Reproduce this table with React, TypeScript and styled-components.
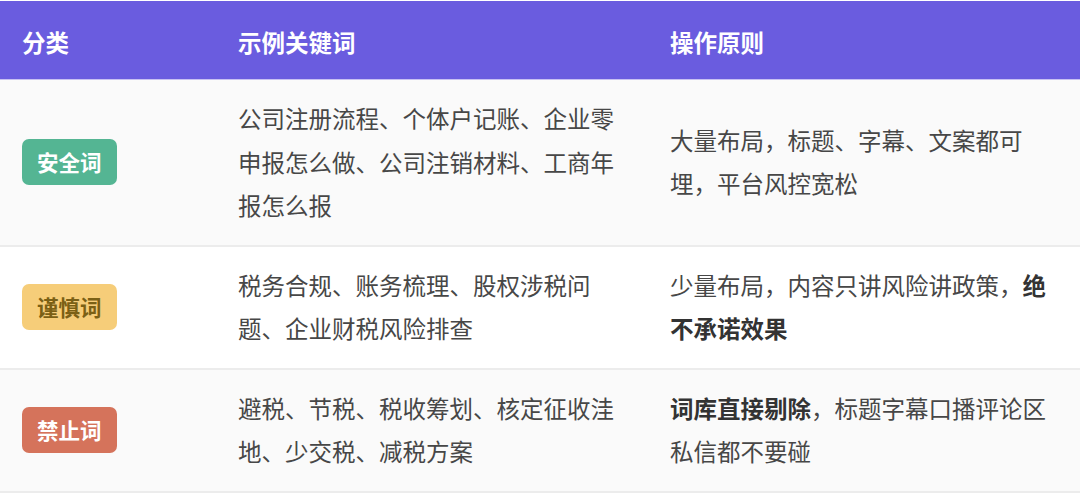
import React from 'react';
import styled, { createGlobalStyle } from 'styled-components';

const GlobalStyle = createGlobalStyle`
    html, body {
        margin: 0;
        padding: 0;
        background: #ffffff;
    }
    body {
        font-family: "Noto Sans CJK SC", "Noto Sans", sans-serif;
        text-spacing-trim: space-all;
    }
`;

type Tone = 'safe' | 'careful' | 'banned';

interface Row {
    tone: Tone;
    label: string;
    keywords: React.ReactNode;
    rule: React.ReactNode;
}

const badgeColors: Record<Tone, { bg: string; fg: string }> = {
    safe: { bg: '#54b593', fg: '#ffffff' },
    careful: { bg: '#f6cd79', fg: '#7b6015' },
    banned: { bg: '#d5735b', fg: '#ffffff' },
};

const Table = styled.div`
    width: 1080px;
    padding-top: 1px;
`;

const Grid = styled.div`
    display: grid;
    grid-template-columns: 20% 40% 40%;
    align-items: center;
`;

const Header = styled(Grid)`
    height: 78px;
    background: #6a5cdf;
    border-bottom: 1px solid #c8c1f2;
    color: #ffffff;
    font-size: 23.5px;
    font-weight: 700;
`;

const HeadCell = styled.div`
    padding: 0 22px;
    line-height: 1;
    margin-top: 6px;
`;

const BodyRow = styled(Grid)<{ $alt: boolean }>`
    background: ${(p) => (p.$alt ? '#fafafa' : '#ffffff')};
    border-bottom: 2px solid #ececec;
    padding: 17px 0;
`;

const Cell = styled.div`
    padding: 0 22px;
    font-size: 23.5px;
    line-height: 43.5px;
    color: #474747;
`;

const Badge = styled.span<{ $tone: Tone }>`
    display: inline-block;
    padding: 12px 15px;
    border-radius: 7px;
    font-size: 21.5px;
    line-height: 22px;
    font-weight: 700;
    background: ${(p) => badgeColors[p.$tone].bg};
    color: ${(p) => badgeColors[p.$tone].fg};
`;

const Strong = styled.b`
    font-weight: 700;
    color: #333333;
`;

const rows: Row[] = [
    {
        tone: 'safe',
        label: '安全词',
        keywords: '公司注册流程、个体户记账、企业零申报怎么做、公司注销材料、工商年报怎么报',
        rule: '大量布局，标题、字幕、文案都可埋，平台风控宽松',
    },
    {
        tone: 'careful',
        label: '谨慎词',
        keywords: '税务合规、账务梳理、股权涉税问题、企业财税风险排查',
        rule: (
            <>
                少量布局，内容只讲风险讲政策，<Strong>绝不承诺效果</Strong>
            </>
        ),
    },
    {
        tone: 'banned',
        label: '禁止词',
        keywords: '避税、节税、税收筹划、核定征收洼地、少交税、减税方案',
        rule: (
            <>
                <Strong>词库直接剔除</Strong>，标题字幕口播评论区私信都不要碰
            </>
        ),
    },
];

export default function App() {
    return (
        <>
            <GlobalStyle />
            <Table>
                <Header>
                    <HeadCell>分类</HeadCell>
                    <HeadCell>示例关键词</HeadCell>
                    <HeadCell>操作原则</HeadCell>
                </Header>
                {rows.map((row, i) => (
                    <BodyRow key={row.label} $alt={i % 2 === 0}>
                        <Cell>
                            <Badge $tone={row.tone}>{row.label}</Badge>
                        </Cell>
                        <Cell>{row.keywords}</Cell>
                        <Cell>{row.rule}</Cell>
                    </BodyRow>
                ))}
            </Table>
        </>
    );
}
